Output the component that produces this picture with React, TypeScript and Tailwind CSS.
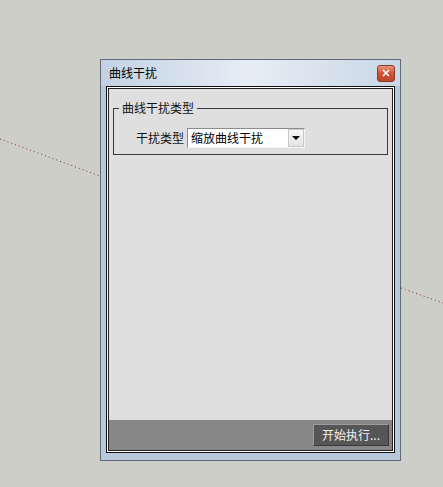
import { X } from 'lucide-react';

const cjk = "font-['Noto_Sans_CJK_SC','Noto_Sans',sans-serif]";

export default function App() {
  return (
    <div className={`relative w-[443px] h-[487px] overflow-hidden bg-[#cecec9] pl-[100px] pt-[59px] ${cjk}`}>
      {/* model axis lines behind the dialog */}
      <svg className="absolute left-0 top-0" width="443" height="487">
        <line x1="0" y1="139" x2="100" y2="176" stroke="#7a3030" strokeWidth="1" strokeDasharray="1 3" />
        <line x1="401" y1="288" x2="443" y2="303" stroke="#7a3030" strokeWidth="1" strokeDasharray="1 3" />
      </svg>

      {/* dialog window */}
      <div className="relative w-[301px] h-[402px] border border-[#5f6b78] bg-[#b7c8db] flex flex-col">
        {/* title bar */}
        <div className="h-[26px] flex items-center justify-between pl-[8px] pr-[5px] bg-gradient-to-r from-[#c3d2e3] via-[#e6edf5] to-[#c9d7e6]">
          <span className="text-[12px] text-black leading-none">曲线干扰</span>
          <div className="w-[18px] h-[17px] rounded-[3px] border border-[#8a3a2a] bg-gradient-to-b from-[#e8957c] via-[#cf5234] to-[#c0462c] flex items-center justify-center">
            <X className="w-[10px] h-[10px] text-white" strokeWidth={4} />
          </div>
        </div>

        {/* client frame */}
        <div className="mx-[5px] mb-[7px] flex-1 border border-[#111] bg-white p-px flex">
          <div className="flex-1 border border-[#222] bg-[#dfdfdf] flex flex-col">
            {/* group box */}
            <div className="mx-[4px] mt-[19px] relative h-[47px] border border-[#3a3a3a]">
              <span className="absolute left-[5px] -top-[9px] bg-[#dfdfdf] px-[3px] text-[12px] leading-[16px] text-[#111]">
                曲线干扰类型
              </span>
              <div className="flex items-center pl-[22px] pt-[19px]">
                <span className="text-[12px] text-[#111] leading-none mr-[3px]">干扰类型</span>
                <div className="w-[118px] h-[20px] bg-white border border-t-[#8c8c8c] border-l-[#8c8c8c] border-b-[#f4f4f4] border-r-[#f4f4f4] flex items-center">
                  <span className="flex-1 pl-[3px] text-[12px] text-black leading-none">缩放曲线干扰</span>
                  <div className="w-[16px] h-[18px] bg-gradient-to-b from-[#fafafa] to-[#e2e2e2] border border-[#c9c9c9] flex items-center justify-center">
                    <div className="w-0 h-0 border-l-[4px] border-r-[4px] border-t-[4px] border-l-transparent border-r-transparent border-t-black" />
                  </div>
                </div>
              </div>
            </div>

            <div className="flex-1" />

            {/* bottom bar */}
            <div className="h-[30px] bg-[#878787] flex items-center justify-end pr-[3px]">
              <button className="w-[76px] h-[22px] bg-[#565656] border border-t-[#9c9c9c] border-l-[#9c9c9c] border-b-[#3a3a3a] border-r-[#3a3a3a] text-[12px] text-[#f0f0f0] leading-none">
                开始执行...
              </button>
            </div>
          </div>
        </div>
      </div>
    </div>
  );
}
